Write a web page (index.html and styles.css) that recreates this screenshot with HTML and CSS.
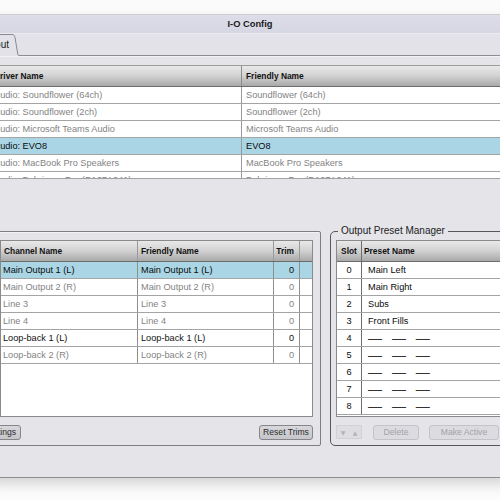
FILE: index.html
```html
<!DOCTYPE html>
<html>
<head>
<meta charset="utf-8">
<link rel="stylesheet" href="styles.css">
</head>
<body>
<div class="window">
  <div class="titlebar">I-O Config</div>
  <div class="tabbar">
    <div class="tab">
      <span class="tab-label">Output</span>
      <svg class="tab-edge" width="9" height="22" viewBox="0 0 9 22">
        <path d="M0 0 H2 C4 0.5 4.6 1.6 5.1 4 L7.6 19 C7.9 21 8.4 21.5 9 21.5 V22 H0 Z" fill="#e2e2e8"/>
        <path d="M0 0.5 H2 C4 0.5 4.6 1.6 5.1 4 L7.6 19 C7.9 21 8.4 21.5 9 21.5" fill="none" stroke="#8a8a8e" stroke-width="1"/>
      </svg>
    </div>
  </div>
  <div class="top-pane">
    <div class="drivers">
      <div class="thead">
        <div class="d1">Driver Name</div>
        <div class="d2">Friendly Name</div>
      </div>
      <div class="drow dim"><div class="d1">Audio: Soundflower (64ch)</div><div class="d2">Soundflower (64ch)</div></div>
      <div class="drow dim"><div class="d1">Audio: Soundflower (2ch)</div><div class="d2">Soundflower (2ch)</div></div>
      <div class="drow dim"><div class="d1">Audio: Microsoft Teams Audio</div><div class="d2">Microsoft Teams Audio</div></div>
      <div class="drow sel"><div class="d1">Audio: EVO8</div><div class="d2">EVO8</div></div>
      <div class="drow dim"><div class="d1">Audio: MacBook Pro Speakers</div><div class="d2">MacBook Pro Speakers</div></div>
      <div class="drow dim"><div class="d1">Audio: Behringer Pro (D167A041)</div><div class="d2">Behringer Pro (D167A041)</div></div>
    </div>
  </div>
  <div class="lower">
    <div class="group left-group">
      <div class="ch-table">
        <div class="chead">
          <div class="k1">Channel Name</div>
          <div class="k2">Friendly Name</div>
          <div class="k3">Trim</div>
          <div class="k4"></div>
        </div>
        <div class="crow sel"><div class="k1">Main Output 1 (L)</div><div class="k2">Main Output 1 (L)</div><div class="k3">0</div><div class="k4"></div></div>
        <div class="crow dim"><div class="k1">Main Output 2 (R)</div><div class="k2">Main Output 2 (R)</div><div class="k3">0</div><div class="k4"></div></div>
        <div class="crow dim"><div class="k1">Line 3</div><div class="k2">Line 3</div><div class="k3">0</div><div class="k4"></div></div>
        <div class="crow dim"><div class="k1">Line 4</div><div class="k2">Line 4</div><div class="k3">0</div><div class="k4"></div></div>
        <div class="crow"><div class="k1">Loop-back 1 (L)</div><div class="k2">Loop-back 1 (L)</div><div class="k3">0</div><div class="k4"></div></div>
        <div class="crow dim"><div class="k1">Loop-back 2 (R)</div><div class="k2">Loop-back 2 (R)</div><div class="k3">0</div><div class="k4"></div></div>
      </div>
      <div class="btn-row">
        <button class="btn btn-settings">Settings</button>
        <button class="btn btn-reset">Reset Trims</button>
      </div>
    </div>
    <div class="group right-group">
      <span class="legend">Output Preset Manager</span>
      <div class="preset-table">
        <div class="phead"><div class="p1">Slot</div><div class="p2">Preset Name</div></div>
        <div class="prow"><div class="p1">0</div><div class="p2">Main Left</div></div>
        <div class="prow"><div class="p1">1</div><div class="p2">Main Right</div></div>
        <div class="prow"><div class="p1">2</div><div class="p2">Subs</div></div>
        <div class="prow"><div class="p1">3</div><div class="p2">Front Fills</div></div>
        <div class="prow"><div class="p1">4</div><div class="p2"><span class="dashes">— — —</span></div></div>
        <div class="prow"><div class="p1">5</div><div class="p2"><span class="dashes">— — —</span></div></div>
        <div class="prow"><div class="p1">6</div><div class="p2"><span class="dashes">— — —</span></div></div>
        <div class="prow"><div class="p1">7</div><div class="p2"><span class="dashes">— — —</span></div></div>
        <div class="prow"><div class="p1">8</div><div class="p2"><span class="dashes">— — —</span></div></div>
      </div>
      <div class="btn-row">
        <div class="arrows"><span>▼</span><span>▲</span></div>
        <button class="btn off btn-delete">Delete</button>
        <button class="btn off btn-active">Make Active</button>
      </div>
    </div>
  </div>
</div>
</body>
</html>
```
FILE: styles.css
```css
* { box-sizing: border-box; }
html, body { margin: 0; padding: 0; }
body {
  width: 500px;
  height: 500px;
  overflow: hidden;
  background: #fbfbfb;
  font-family: "Liberation Sans", Arial, sans-serif;
  color: #111;
}

.window {
  width: 520px;
  margin: 14px 0 0 -10px;
  border-top: 1px solid #cdced4;
  border-bottom: 1px solid #8e8e92;
  background: #e4e4e9;
  box-shadow: 0 6px 12px rgba(0, 0, 0, 0.16);
}

.titlebar {
  height: 18px;
  background: linear-gradient(#dcdde8, #d6d7e3);
  text-align: center;
  font-weight: bold;
  font-size: 9.3px;
  line-height: 18px;
  color: #1a1a1a;
}

.tabbar {
  height: 23px;
  background: #e2e2e8;
  border-top: 1px solid #ececf0;
  border-bottom: 1px solid #8d8d92;
  display: flex;
  align-items: flex-end;
}
.tab {
  display: flex;
  height: 22px;
  margin-left: -11px;
  margin-bottom: -1px;
}
.tab-label {
  border-top: 1px solid #8a8a8e;
  background: #e2e2e8;
  font-size: 10px;
  line-height: 20px;
  padding-right: 1px;
  color: #222;
}
.tab-edge { display: block; }

.top-pane {
  height: 123px;
  border-top: 1px solid #f3f3f6;
  border-bottom: 1px solid #a2a2a6;
  padding-top: 8px;
  overflow: hidden;
}
.drivers {
  height: 113px;
  overflow: hidden;
  background: #fff;
}
.thead, .chead, .phead {
  display: flex;
  background: linear-gradient(#e9e9e9 0%, #d4d4d4 45%, #a9a9a9 100%);
  border-bottom: 1px solid #6c6c6c;
  font-weight: bold;
  font-size: 8.4px;
  color: #111;
}
.thead { height: 22px; line-height: 21px; border-top: 1px solid #9c9c9c; }
.drow {
  display: flex;
  height: 17px;
  line-height: 16px;
  border-bottom: 1px solid #a4a4a4;
  font-size: 9.2px;
  white-space: nowrap;
}
.d1 {
  width: 252px;
  flex: none;
  padding-left: 4px;
  border-right: 1px solid #9a9a9a;
  overflow: hidden;
}
.d2 { flex: 1; padding-left: 4px; overflow: hidden; }
.thead .d1 { border-right-color: #8c8c8c; }

.dim { color: #838383; }
.sel { background: #a9d5e5; color: #0c0c0c; }

.lower {
  display: flex;
  align-items: flex-start;
  padding: 52px 0 31px 3px;
}
.group { position: relative; }
.left-group {
  width: 328px;
  flex: none;
  border: 1px solid #7e7e82;
  border-radius: 2px;
  padding: 8px 7px 5px 6px;
  box-shadow: inset 1px 1px 0 #f2f2f5;
}
.right-group {
  width: 180px;
  flex: none;
  margin-left: 9px;
  border: 1px solid #58585c;
  border-radius: 5px;
  padding: 8px 5px 5px 5px;
}
.legend {
  position: absolute;
  top: -7px;
  left: 7px;
  padding: 0 3px;
  background: #e4e4e9;
  font-size: 10px;
  line-height: 12px;
  color: #222;
}

.ch-table, .preset-table {
  height: 177px;
  border: 1px solid #8a8a8e;
  background: #fff;
  overflow: hidden;
}
.ch-table { width: 313px; }
.preset-table { width: 200px; }
.chead, .phead { height: 21px; line-height: 20px; }
.crow, .prow {
  display: flex;
  height: 17px;
  line-height: 16px;
  border-bottom: 1px solid #a4a4a4;
  font-size: 9.2px;
  white-space: nowrap;
}
.k1, .k2, .k3 { flex: none; border-right: 1px solid #8e8e8e; overflow: hidden; }
.k1 { width: 137px; padding-left: 2px; }
.chead .k1 { padding-left: 3px; }
.k2 { width: 136px; padding-left: 3px; }
.k3 { width: 26px; text-align: right; padding-right: 5px; }
.k4 { flex: 1; }
.chead .k1, .chead .k2, .chead .k3 { border-right-color: #9a9a9a; }

.p1 {
  width: 25px;
  flex: none;
  text-align: center;
  border-right: 1px solid #6e6e6e;
}
.p2 { flex: 1; padding-left: 6px; }
.phead .p2 { padding-left: 2px; }
.prow { color: #0c0c0c; }
.dashes {
  font-size: 14px;
  word-spacing: 6px;
  color: #333;
}

.btn-row {
  display: flex;
  height: 15px;
  margin-top: 8px;
}
.btn {
  height: 15px;
  margin: 0;
  padding: 0 4px;
  border: 1px solid #86868a;
  border-radius: 3px;
  background: linear-gradient(#d8d8dc, #c6c6ca);
  font-family: "Liberation Sans", Arial, sans-serif;
  font-size: 8.6px;
  line-height: 13px;
  color: #2a2a2a;
}
.btn-settings { margin-left: -20px; }
.btn-reset { margin-left: auto; width: 54px; padding: 0; }
.off {
  background: #dcdce0;
  border-color: #c4c4c8;
  color: #a2a2a8;
}
.arrows {
  width: 26px;
  height: 14px;
  display: flex;
  justify-content: space-around;
  align-items: center;
  background: #dedee2;
  border: 1px solid #d2d2d6;
  font-family: "DejaVu Sans", sans-serif;
  font-size: 6px;
  color: #b2b2b8;
}
.btn-delete { margin-left: 11px; width: 46px; padding: 0; }
.btn-active { margin-left: 10px; width: 70px; padding: 0; }
```
